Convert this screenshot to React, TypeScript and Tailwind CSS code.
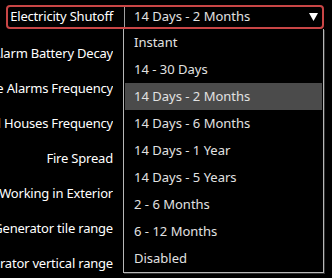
const labels = [
  "Alarm Battery Decay",
  "House Alarms Frequency",
  "Locked Houses Frequency",
  "Fire Spread",
  "Generator Working in Exterior",
  "Generator tile range",
  "Generator vertical range",
];

const options = [
  "Instant",
  "14 - 30 Days",
  "14 Days - 2 Months",
  "14 Days - 6 Months",
  "14 Days - 1 Year",
  "14 Days - 5 Years",
  "2 - 6 Months",
  "6 - 12 Months",
  "Disabled",
];

export default function App() {
  const selected = "14 Days - 2 Months";
  return (
    <div
      className="relative w-[332px] h-[278px] overflow-hidden bg-black text-[13px] text-white"
      style={{ fontFamily: '"Noto Sans", "Open Sans", sans-serif' }}
    >
      <div className="pt-[5px] pl-[6px] pr-[8px]">
        {/* selected setting */}
        <div className="flex h-[24px] items-stretch rounded-[4px] border-2 border-[#c94646]">
          <div className="flex w-[116px] items-center justify-end pr-[11px] whitespace-nowrap tracking-[-0.2px]">
            Electricity Shutoff
          </div>
          <div className="w-px bg-[#a0a0a0]" />
          <div className="flex flex-1 items-center justify-between pl-[9px] pr-[4px] text-[#e2e2e2]">
            <span>{selected}</span>
            <svg width="9" height="8" viewBox="0 0 9 8">
              <path d="M0 0 L9 0 L4.5 8 Z" fill="#fff" />
            </svg>
          </div>
        </div>
      </div>

      <div className="mt-[7px] flex flex-col">
        {labels.map((l) => (
          <div
            key={l}
            className="flex h-[35px] w-[113px] items-center justify-end overflow-hidden whitespace-nowrap tracking-[-0.2px]"
          >
            {l}
          </div>
        ))}
      </div>

      {/* open dropdown */}
      <div className="absolute left-[123px] top-[29px] w-[201px] border-x border-b border-[#b8b8b8] bg-black px-px shadow-[1px_1px_0_#333]">
        {options.map((o) => (
          <div
            key={o}
            className={
              "flex h-[27px] items-center pl-[9px] text-[#e2e2e2] " +
              (o === selected ? "bg-[#4b4b4b]" : "")
            }
          >
            {o}
          </div>
        ))}
      </div>
    </div>
  );
}
